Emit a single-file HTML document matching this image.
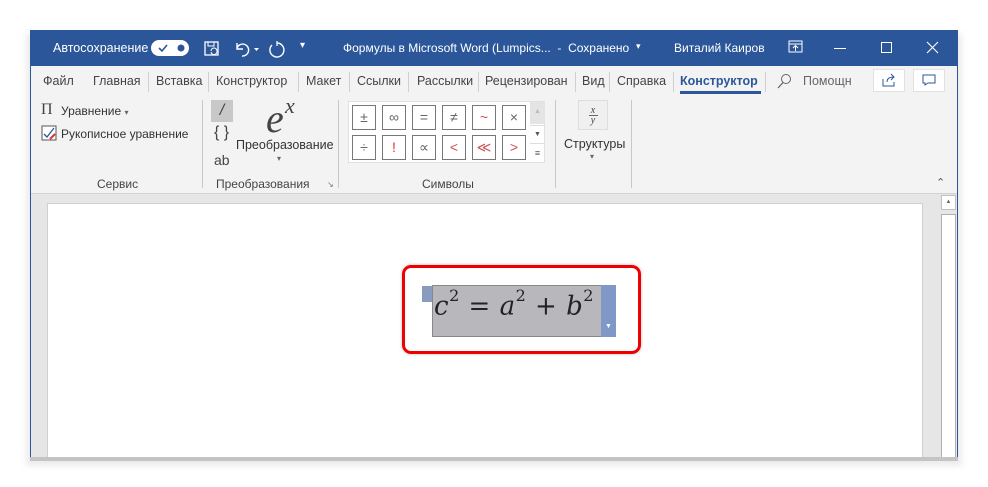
<!DOCTYPE html>
<html><head><meta charset="utf-8"><style>
*{margin:0;padding:0;box-sizing:border-box}
body{width:988px;height:487px;background:#fff;position:relative;overflow:hidden;font-family:"Liberation Sans","DejaVu Sans",sans-serif;font-size:12px;color:#333}
.a{position:absolute;white-space:nowrap}
.t{color:#fff;font-size:12px}
.tab{top:74px;font-size:12.5px;color:#444}
.sep{position:absolute;top:72px;width:1px;height:20px;background:#d0d0d0}
.cell{position:absolute;width:24px;height:25px;border:1px solid #777;background:#fff;text-align:center;line-height:23px;font-size:14px;color:#666}
.vs{position:absolute;width:1px;background:#c8c8c8}
.eq sup{font-size:16px;position:relative;top:-4px}
</style></head><body>
<div class="a" style="left:26px;top:34px;width:936px;height:432px;background:#ececec;filter:blur(3px)"></div>
<div class="a" style="left:30px;top:30px;width:928px;height:36px;background:#2b579a"></div>
<div class="a t" style="left:53px;top:41px;font-size:12.5px">Автосохранение</div>
<div class="a" style="left:151px;top:40px;width:38px;height:16px;background:#fff;border-radius:8px"></div>
<svg class="a" style="left:151px;top:40px" width="38" height="16"><path d="M8 8l3 3 5-6" stroke="#2b579a" stroke-width="1.6" fill="none"/><circle cx="30" cy="8" r="3.5" fill="#2b579a"/></svg>
<svg class="a" style="left:202px;top:39px" width="20" height="20"><rect x="3" y="3" width="13" height="13" fill="none" stroke="#fff" stroke-width="1.3"/><rect x="6" y="3" width="6" height="4" fill="none" stroke="#fff"/><path d="M9 12a3 3 0 0 1 6 0M15 12a3 3 0 0 1-6 1" stroke="#fff" fill="none"/></svg>
<svg class="a" style="left:232px;top:39px" width="30" height="20"><path d="M5 4v6h6M5 9a6 6 0 1 1 5 8" stroke="#fff" stroke-width="1.4" fill="none"/><path d="M22 9h5l-2.5 3z" fill="#fff"/></svg>
<svg class="a" style="left:266px;top:39px" width="20" height="20"><path d="M11 4a7 7 0 1 1-5 2" stroke="#fff" stroke-width="1.4" fill="none"/><path d="M11 2v5" stroke="#fff" stroke-width="1.2"/></svg>
<div class="a t" style="left:300px;top:40px;font-size:10px">▾</div>
<div class="a t" style="left:343px;top:41px">Формулы в Microsoft Word (Lumpics...&nbsp; - &nbsp;Сохранено</div>
<div class="a t" style="left:636px;top:41px;font-size:9px">▾</div>
<div class="a t" style="left:674px;top:41px">Виталий Каиров</div>
<svg class="a" style="left:788px;top:40px" width="16" height="14"><rect x="1" y="1" width="13" height="11" fill="none" stroke="#fff"/><path d="M1 4h13M7.5 11V6M5 8l2.5-2.5L10 8" stroke="#fff" fill="none"/></svg>
<div class="a" style="left:834px;top:48px;width:12px;height:1px;background:#fff"></div>
<div class="a" style="left:881px;top:42px;width:11px;height:11px;border:1px solid #fff"></div>
<svg class="a" style="left:926px;top:41px" width="13" height="13"><path d="M1 1l11 11M12 1L1 12" stroke="#fff" stroke-width="1.1"/></svg>
<div class="a" style="left:30px;top:66px;width:928px;height:127px;background:#f3f3f3;border-left:1px solid #2b579a;border-right:1px solid #2b579a"></div>
<div class="a tab" style="left:43px">Файл</div>
<div class="a tab" style="left:93px">Главная</div><div class="sep" style="left:148px"></div>
<div class="a tab" style="left:156px">Вставка</div><div class="sep" style="left:208px"></div>
<div class="a tab" style="left:216px">Конструктор</div><div class="sep" style="left:298px"></div>
<div class="a tab" style="left:306px">Макет</div><div class="sep" style="left:349px"></div>
<div class="a tab" style="left:357px">Ссылки</div><div class="sep" style="left:408px"></div>
<div class="a tab" style="left:417px">Рассылки</div><div class="sep" style="left:478px"></div>
<div class="a tab" style="left:485px">Рецензирован</div><div class="sep" style="left:575px"></div>
<div class="a tab" style="left:582px">Вид</div><div class="sep" style="left:609px"></div>
<div class="a tab" style="left:617px">Справка</div><div class="sep" style="left:673px"></div>
<div class="a tab" style="left:680px;color:#2b579a;font-weight:bold">Конструктор</div>
<div class="a" style="left:680px;top:91px;width:81px;height:3px;background:#2b579a"></div>
<div class="sep" style="left:765px"></div>
<svg class="a" style="left:777px;top:73px" width="16" height="16"><circle cx="9" cy="6" r="4.5" stroke="#666" fill="none"/><path d="M6 9.5L1 15" stroke="#666" stroke-width="1.3"/></svg>
<div class="a tab" style="left:803px;color:#666">Помощн</div>
<div class="a" style="left:873px;top:69px;width:32px;height:23px;background:#fff;border:1px solid #e2e2e2"></div>
<svg class="a" style="left:881px;top:73px" width="16" height="14"><path d="M2 6v7h11V9M6 9c0-4 3-5 7-5M10 1l3 3-3 3" stroke="#2b579a" fill="none"/></svg>
<div class="a" style="left:913px;top:69px;width:32px;height:23px;background:#fff;border:1px solid #e2e2e2"></div>
<svg class="a" style="left:922px;top:74px" width="14" height="12"><path d="M1 1h12v8H6l-3 2V9H1z" stroke="#2b579a" fill="none"/></svg>
<div class="a" style="left:41px;top:101px;font-size:16px;color:#444;font-family:'Liberation Serif',serif">Π</div>
<div class="a" style="left:61px;top:104px;color:#333">Уравнение <span style="font-size:8px;color:#666">▾</span></div>
<svg class="a" style="left:41px;top:125px" width="17" height="17"><rect x="1" y="1" width="14" height="14" fill="#fff" stroke="#555"/><path d="M3 9l3 3 7-9" stroke="#2b579a" fill="none" stroke-width="1.3"/><path d="M9 14l5-5" stroke="#d33" stroke-width="2"/></svg>
<div class="a" style="left:61px;top:127px;color:#333">Рукописное уравнение</div>
<div class="a" style="left:97px;top:177px;color:#444">Сервис</div>
<div class="vs" style="left:202px;top:100px;height:88px"></div>
<div class="a" style="left:211px;top:100px;width:22px;height:22px;background:#c8c8c8;text-align:center;font-size:16px;line-height:22px;color:#444;font-style:italic">/</div>
<div class="a" style="left:214px;top:124px;font-size:16px;color:#444">{ }</div>
<div class="a" style="left:214px;top:152px;font-size:14px;color:#444">ab</div>
<div class="a" style="left:266px;top:99px;font-family:'Liberation Serif',serif;font-style:italic;font-size:40px;color:#444;line-height:40px">e</div>
<div class="a" style="left:285px;top:95px;font-family:'Liberation Serif',serif;font-style:italic;font-size:22px;color:#444;line-height:22px">x</div>
<div class="a" style="left:236px;top:138px;font-size:12.5px;color:#333">Преобразование</div>
<div class="a" style="left:277px;top:154px;font-size:8px;color:#666">▾</div>
<div class="a" style="left:216px;top:177px;color:#444">Преобразования</div>
<div class="a" style="left:327px;top:180px;font-size:8px;color:#777">↘</div>
<div class="vs" style="left:338px;top:100px;height:88px"></div>
<div class="a" style="left:348px;top:101px;width:197px;height:62px;background:#fff;border:1px solid #e0e0e0"></div>
<div class="cell" style="left:352px;top:105px">±</div>
<div class="cell" style="left:382px;top:105px">∞</div>
<div class="cell" style="left:412px;top:105px">=</div>
<div class="cell" style="left:442px;top:105px">≠</div>
<div class="cell" style="left:472px;top:105px;color:#c55">~</div>
<div class="cell" style="left:502px;top:105px">×</div>
<div class="cell" style="left:352px;top:135px">÷</div>
<div class="cell" style="left:382px;top:135px;color:#d33">!</div>
<div class="cell" style="left:412px;top:135px">∝</div>
<div class="cell" style="left:442px;top:135px;color:#c55">&lt;</div>
<div class="cell" style="left:472px;top:135px;color:#c55">≪</div>
<div class="cell" style="left:502px;top:135px;color:#c55">&gt;</div>
<div class="a" style="left:530px;top:102px;width:15px;height:22px;background:#e4e4e4;font-size:7px;color:#bbb;text-align:center;line-height:20px">▲</div>
<div class="a" style="left:530px;top:125px;width:15px;height:18px;border-top:1px solid #ddd;font-size:7px;color:#555;text-align:center;line-height:18px">▼</div>
<div class="a" style="left:530px;top:143px;width:15px;height:19px;border-top:1px solid #ddd;font-size:9px;color:#555;text-align:center;line-height:18px">≡</div>
<div class="a" style="left:422px;top:177px;color:#444">Символы</div>
<div class="vs" style="left:555px;top:100px;height:88px"></div>
<div class="a" style="left:578px;top:100px;width:30px;height:30px;background:#f0f0f0;border:1px solid #ddd;text-align:center;font-family:'Liberation Serif',serif;font-style:italic;font-size:10px;line-height:9px;padding-top:5px;color:#444">x<br><span style="display:inline-block;border-top:1px solid #666;width:9px">y</span></div>
<div class="a" style="left:564px;top:137px;font-size:12.5px;color:#333">Структуры</div>
<div class="a" style="left:590px;top:152px;font-size:8px;color:#666">▾</div>
<div class="vs" style="left:631px;top:100px;height:88px"></div>
<div class="a" style="left:936px;top:176px;font-size:11px;color:#555">⌃</div>
<div class="a" style="left:31px;top:193px;width:926px;height:264px;background:#e6e6e6;border-top:1px solid #d2d2d2"></div>
<div class="a" style="left:30px;top:193px;width:1px;height:264px;background:#2b579a"></div>
<div class="a" style="left:957px;top:193px;width:1px;height:264px;background:#2b579a"></div>
<div class="a" style="left:47px;top:203px;width:876px;height:254px;background:#fff;border:1px solid #d0d0d0;border-bottom:none"></div>
<div class="a" style="left:941px;top:195px;width:15px;height:15px;background:#fff;border:1px solid #c0c0c0;font-size:6px;color:#666;text-align:center;line-height:13px">▲</div>
<div class="a" style="left:941px;top:214px;width:15px;height:243px;background:#fff;border:1px solid #b0b0b0;border-bottom:none"></div>
<div class="a" style="left:30px;top:457px;width:928px;height:4px;background:#c4c4c4"></div>
<div class="a" style="left:402px;top:265px;width:239px;height:89px;border:3px solid #e00;border-radius:9px;box-shadow:0 0 3px #bbb"></div>
<div class="a" style="left:422px;top:286px;width:12px;height:16px;background:#8a9bc0"></div>
<div class="a" style="left:432px;top:285px;width:170px;height:52px;background:#b8b8bc;border:1px solid #888"></div>
<div class="a" style="left:601px;top:285px;width:15px;height:52px;background:#7f98c8;font-size:7px;color:#fff;text-align:center;padding-top:38px">▼</div>
<div class="a eq" style="left:434px;top:290px;font-family:'DejaVu Serif',serif;font-size:26px;color:#222;letter-spacing:0.5px"><i>c</i><sup>2</sup> = <i>a</i><sup>2</sup> + <i>b</i><sup>2</sup></div>
</body></html>
